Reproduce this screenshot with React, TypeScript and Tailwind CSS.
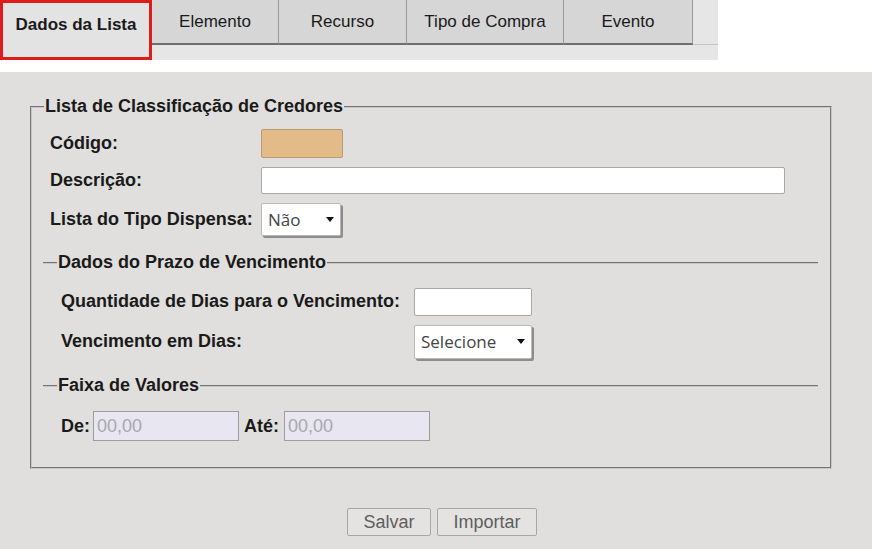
import { ReactNode } from "react";

const tabs = ["Elemento", "Recurso", "Tipo de Compra", "Evento"];
const tabWidths = ["w-[127px]", "w-[128px]", "w-[157px]", "w-[129px]"];

function Caret() {
  return (
    <svg width="8" height="5" viewBox="0 0 8 5" className="shrink-0">
      <path d="M0 0 L8 0 L4 5 Z" fill="#111" />
    </svg>
  );
}

function Select({ value, className }: { value: string; className: string }) {
  return (
    <div
      className={`flex items-center justify-between bg-white border border-[#b9b9b9] rounded-[2px] pl-[6px] pr-[6px] shadow-[2px_2px_0_#8d8d8d] font-['Open_Sans',sans-serif] font-normal text-[17px] text-[#444] ${className}`}
    >
      <span>{value}</span>
      <Caret />
    </div>
  );
}

function Legend({ children }: { children: ReactNode }) {
  return <legend className="-ml-[4px] px-[1px] text-[18px] font-bold text-[#1a1a1a]">{children}</legend>;
}

export default function App() {
  return (
    <div className="w-[872px] h-[549px] bg-white font-['Liberation_Sans',Arial,sans-serif] overflow-hidden">
      <div className="w-[718px] h-[60px] bg-[#e6e6e6] flex items-start">
        <div className="w-[152px] h-[60px] border-[3px] border-[#e01b1b] bg-[#e3e3e3] flex items-center justify-center text-[17px] font-bold text-[#1a1a1a] pb-[10px]">
          Dados da Lista
        </div>
        {tabs.map((t, i) => (
          <div
            key={t}
            className={`${tabWidths[i]} h-[45px] bg-[#d6d6d6] border-r border-r-[#9a9a9a] border-b-2 border-b-[#6e6e6e] flex items-center justify-center text-[17px] text-[#1a1a1a]`}
          >
            {t}
          </div>
        ))}
        <div className="flex-1 h-[45px] border-b border-b-[#c4c4c4]" />
      </div>

      <div className="mt-[12px] h-[477px] bg-[#e0dfdd] pt-[21px] pl-[30px] pr-[40px]">
        <fieldset className="h-[376px] border-2 [border-style:groove] border-[#c8c8c8] pl-[16px] pr-[12px] pt-[2px] ml-0">
          <Legend>Lista de Classificação de Credores</Legend>
          <div className="text-[18px] font-bold text-[#1a1a1a]">
            <div className="flex items-center h-[30px] mt-[6px]">
              <span className="w-[213px] pl-[2px]">Código:</span>
              <div className="w-[82px] h-[29px] bg-[#e3bb89] border border-[#b89a74] rounded-[2px]" />
            </div>
            <div className="flex items-center h-[28px] mt-[8px]">
              <span className="w-[213px] pl-[2px]">Descrição:</span>
              <div className="w-[524px] h-[27px] bg-white border border-[#a8a8a8] rounded-[2px]" />
            </div>
            <div className="flex items-center h-[35px] mt-[8px]">
              <span className="w-[213px] pl-[2px] whitespace-nowrap">Lista do Tipo Dispensa:</span>
              <Select value="Não" className="w-[80px] h-[33px]" />
            </div>
          </div>

          <fieldset className="-ml-[5px] mt-[12px] border-t-2 [border-style:groove] border-[#c8c8c8] border-x-0 border-b-0 pl-[18px]">
            <Legend>Dados do Prazo de Vencimento</Legend>
            <div className="text-[18px] font-bold text-[#1a1a1a]">
              <div className="flex items-center h-[29px] mt-[11px]">
                <span className="w-[353px] whitespace-nowrap">Quantidade de Dias para o Vencimento:</span>
                <div className="w-[118px] h-[28px] bg-white border border-[#a8a8a8] rounded-[2px]" />
              </div>
              <div className="flex items-center h-[35px] mt-[8px]">
                <span className="w-[353px]">Vencimento em Dias:</span>
                <Select value="Selecione" className="w-[118px] h-[34px]" />
              </div>
            </div>
          </fieldset>

          <fieldset className="-ml-[5px] mt-[13px] border-t-2 [border-style:groove] border-[#c8c8c8] border-x-0 border-b-0 pl-[18px]">
            <Legend>Faixa de Valores</Legend>
            <div className="flex items-center h-[30px] mt-[12px] text-[18px] font-bold text-[#1a1a1a]">
              <span className="mr-[3px]">De:</span>
              <div className="w-[146px] h-[30px] bg-[#e7e6f1] border border-[#9d9d9d] flex items-center px-[3px] text-[18px] font-normal text-[#a8a8b0]">
                00,00
              </div>
              <span className="ml-[5px] mr-[5px]">Até:</span>
              <div className="w-[146px] h-[30px] bg-[#e7e6f1] border border-[#9d9d9d] flex items-center px-[3px] text-[18px] font-normal text-[#a8a8b0]">
                00,00
              </div>
            </div>
          </fieldset>
        </fieldset>

        <div className="flex justify-center gap-[6px] mt-[39px] pl-[22px]">
          <button className="w-[84px] h-[28px] bg-[#e4e3e1] border border-[#a7a7a7] rounded-[2px] text-[18px] text-[#5e5e5e]">
            Salvar
          </button>
          <button className="w-[100px] h-[28px] bg-[#e4e3e1] border border-[#a7a7a7] rounded-[2px] text-[18px] text-[#5e5e5e]">
            Importar
          </button>
        </div>
      </div>
    </div>
  );
}
